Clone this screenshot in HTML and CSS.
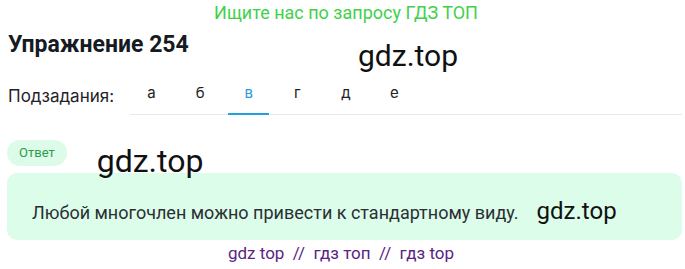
FILE: index.html
```html
<!DOCTYPE html>
<html>
<head>
    <link rel="stylesheet" href="styles.css">
</head>
<body>
    <div class="promo">Ищите нас по запросу ГДЗ ТОП</div>

    <div class="title-row">
        <h1>Упражнение 254</h1>
        <span class="mark mark-big mark-title">gdz.top</span>
    </div>

    <div class="subtasks">
        <span class="subtasks-label">Подзадания:</span>
        <div class="tabs">
            <span class="tab">а</span>
            <span class="tab">б</span>
            <span class="tab active">в</span>
            <span class="tab">г</span>
            <span class="tab">д</span>
            <span class="tab">е</span>
        </div>
    </div>

    <div class="answer-head">
        <span class="badge">Ответ</span>
        <span class="mark mark-big mark-answer">gdz.top</span>
    </div>

    <div class="answer-box">
        <p>Любой многочлен можно привести к стандартному виду.</p>
        <span class="mark mark-small">gdz.top</span>
    </div>

    <div class="footer-links">gdz top &nbsp;//&nbsp; гдз топ &nbsp;//&nbsp; гдз top</div>
</body>
</html>
```

FILE: styles.css
```css
body {
    margin: 0;
    padding: 0 0 0 7px;
    font-family: Roboto, "Liberation Sans", sans-serif;
    color: #1c1c1c;
    width: 675px;
    overflow: hidden;
}
.promo {
    text-align: center;
    color: #3fd14a;
    font-size: 18px;
    line-height: 20px;
    padding-top: 3px;
    padding-left: 3px;
}
.title-row {
    display: flex;
    align-items: flex-start;
    height: 44px;
    margin-top: 9px;
}
h1 {
    margin: 0 0 0 1px;
    font-size: 23px;
    line-height: 26px;
    font-weight: 700;
    color: #151a23;
    white-space: nowrap;
    width: 182px;
}
.mark {
    font-family: Roboto, "Liberation Sans", sans-serif;
    color: #111;
}
.mark-big {
    font-size: 30px;
    line-height: 34px;
}
.mark-title {
    margin-left: 168px;
    margin-top: 7px;
}
.subtasks {
    display: flex;
    align-items: flex-end;
    height: 34px;
    margin-top: 5px;
}
.subtasks-label {
    font-family: Inter, Roboto, sans-serif;
    font-size: 17px;
    line-height: 20px;
    color: #1f2229;
    padding-left: 1px;
    padding-bottom: 9px;
    width: 122px;
}
.tabs {
    display: flex;
    flex: 1;
    border-bottom: 1px solid #e6e8ea;
    padding-left: 0;
}
.tab {
    width: 41px;
    margin-right: 7.6px;
    text-align: center;
    font-family: Inter, Roboto, sans-serif;
    font-size: 15px;
    line-height: 20px;
    padding-bottom: 10px;
    color: #222;
    border-bottom: 2px solid transparent;
    margin-bottom: -1px;
}
.tab:first-child {
    margin-left: 1px;
}
.tab.active {
    color: #2a9bd7;
    border-bottom-color: #1ea2e4;
}
.answer-head {
    display: flex;
    align-items: flex-start;
    height: 33px;
    margin-top: 25px;
}
.badge {
    background: #dcfbe8;
    color: #2e9a4c;
    font-size: 13px;
    line-height: 26px;
    padding: 0 12px;
    border-radius: 13px;
}
.mark-answer {
    font-size: 32px;
    margin-left: 30px;
    margin-top: 4px;
}
.answer-box {
    display: flex;
    align-items: center;
    background: #dbfde9;
    border-radius: 10px;
    height: 67px;
    padding-left: 25px;
}
.answer-box p {
    margin: 12px 0 0;
    font-size: 18px;
    color: #2b2e33;
}
.mark-small {
    font-size: 24px;
    margin-left: 18px;
    margin-top: 9px;
}
.footer-links {
    text-align: center;
    color: #5a2583;
    font-size: 17px;
    line-height: 20px;
    margin-top: 3px;
    padding-right: 7px;
}
```
